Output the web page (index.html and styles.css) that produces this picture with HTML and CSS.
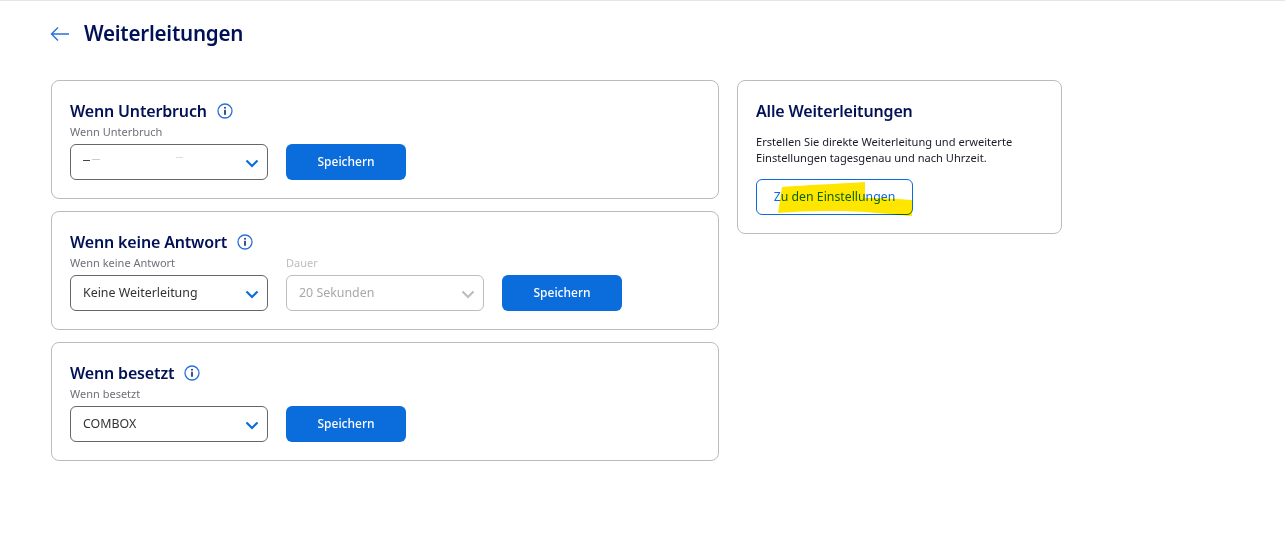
FILE: index.html
```html
<!DOCTYPE html>
<html lang="de">
<head>
    <meta charset="UTF-8">
    <title>Weiterleitungen</title>
    <link rel="stylesheet" href="styles.css">
</head>
<body>
    <header class="page-head">
        <svg class="back-icon" width="20" height="16" viewBox="0 0 20 16" fill="none" stroke="#2a6fdb" stroke-width="1.4">
            <path d="M19 8H1.5M8 1.5L1.5 8L8 14.5"/>
        </svg>
        <h1>Weiterleitungen</h1>
    </header>

    <main class="columns">
        <div class="forward-list">
            <!-- Wenn Unterbruch -->
            <section class="card">
                <h2>Wenn Unterbruch
                    <svg class="info-icon" width="16" height="16" viewBox="0 0 16 16" fill="none">
                        <circle cx="8" cy="8" r="7" stroke="#2a6fdb" stroke-width="1.3"/>
                        <rect x="7.2" y="6.8" width="1.6" height="5" fill="#0a2a6b"/>
                        <rect x="7.2" y="3.9" width="1.6" height="1.7" fill="#0a2a6b"/>
                    </svg>
                </h2>
                <div class="form-row">
                    <div class="field">
                        <span class="field-label">Wenn Unterbruch</span>
                        <div class="select">
                            <!-- number is painted out in the original, only scraps remain -->
                            <span class="scrap-plus"></span>
                            <span class="scrap-specks"></span>
                            <span class="scrap-dash"></span>
                            <svg class="chevron" width="14" height="9" viewBox="0 0 14 9" fill="none" stroke="#0b6cdc" stroke-width="2.2"><path d="M1.5 1.5L7 7L12.5 1.5"/></svg>
                        </div>
                    </div>
                    <button class="btn-primary">Speichern</button>
                </div>
            </section>

            <!-- Wenn keine Antwort -->
            <section class="card">
                <h2>Wenn keine Antwort
                    <svg class="info-icon" width="16" height="16" viewBox="0 0 16 16" fill="none">
                        <circle cx="8" cy="8" r="7" stroke="#2a6fdb" stroke-width="1.3"/>
                        <rect x="7.2" y="6.8" width="1.6" height="5" fill="#0a2a6b"/>
                        <rect x="7.2" y="3.9" width="1.6" height="1.7" fill="#0a2a6b"/>
                    </svg>
                </h2>
                <div class="form-row">
                    <div class="field">
                        <span class="field-label">Wenn keine Antwort</span>
                        <div class="select">
                            <span>Keine Weiterleitung</span>
                            <svg class="chevron" width="14" height="9" viewBox="0 0 14 9" fill="none" stroke="#0b6cdc" stroke-width="2.2"><path d="M1.5 1.5L7 7L12.5 1.5"/></svg>
                        </div>
                    </div>
                    <div class="field disabled">
                        <span class="field-label">Dauer</span>
                        <div class="select">
                            <span>20 Sekunden</span>
                            <svg class="chevron" width="14" height="9" viewBox="0 0 14 9" fill="none" stroke="#bdbdbd" stroke-width="2.2"><path d="M1.5 1.5L7 7L12.5 1.5"/></svg>
                        </div>
                    </div>
                    <button class="btn-primary">Speichern</button>
                </div>
            </section>

            <!-- Wenn besetzt -->
            <section class="card">
                <h2>Wenn besetzt
                    <svg class="info-icon" width="16" height="16" viewBox="0 0 16 16" fill="none">
                        <circle cx="8" cy="8" r="7" stroke="#2a6fdb" stroke-width="1.3"/>
                        <rect x="7.2" y="6.8" width="1.6" height="5" fill="#0a2a6b"/>
                        <rect x="7.2" y="3.9" width="1.6" height="1.7" fill="#0a2a6b"/>
                    </svg>
                </h2>
                <div class="form-row">
                    <div class="field">
                        <span class="field-label">Wenn besetzt</span>
                        <div class="select">
                            <span>COMBOX</span>
                            <svg class="chevron" width="14" height="9" viewBox="0 0 14 9" fill="none" stroke="#0b6cdc" stroke-width="2.2"><path d="M1.5 1.5L7 7L12.5 1.5"/></svg>
                        </div>
                    </div>
                    <button class="btn-primary">Speichern</button>
                </div>
            </section>
        </div>

        <aside class="card side-card">
            <h2>Alle Weiterleitungen</h2>
            <p>Erstellen Sie direkte Weiterleitung und erweiterte Einstellungen tagesgenau und nach Uhrzeit.</p>
            <button class="btn-outline">Zu den Einstellungen
                <!-- yellow marker scribble on top of the button -->
                <svg class="marker" width="140" height="38" viewBox="0 0 140 38">
                    <path d="M2 33L6 7C30 5 60 4 89 2L89 18C105 18 125 19 136 20L136 36C128 36 120 34 100 33C70 30 30 31 2 33Z" fill="#ffe600"/>
                </svg>
            </button>
        </aside>
    </main>
</body>
</html>
```

FILE: styles.css
```css
body {
    margin: 0;
    font-family: "Noto Sans", "Open Sans", sans-serif;
    background-color: #fff;
    color: #001155;
    border-top: 1px solid #e2e6ea;
}

.page-head {
    display: flex;
    align-items: flex-start;
    gap: 14px;
    padding: 16px 0 0 50px;
    height: 63px;
    box-sizing: border-box;
    margin-bottom: 16px;
}

.back-icon {
    margin-top: 9px;
}

h1 {
    margin: 0;
    font-size: 20.6px;
    line-height: 33px;
    font-weight: 600;
    letter-spacing: -0.25px;
}

.columns {
    display: flex;
    align-items: flex-start;
    gap: 18px;
    padding-left: 51px;
}

.forward-list {
    display: flex;
    flex-direction: column;
    gap: 12px;
    width: 668px;
}

.card {
    box-sizing: border-box;
    height: 119px;
    border: 1px solid #bcbcbc;
    border-radius: 8px;
    padding: 18px 18px 0;
}

h2 {
    margin: 0;
    font-size: 16px;
    line-height: 24px;
    font-weight: 600;
    letter-spacing: -0.16px;
    display: flex;
    align-items: center;
    gap: 10px;
}

.form-row {
    display: flex;
    align-items: flex-end;
    gap: 18px;
    padding-top: 1px;
}

.field {
    display: flex;
    flex-direction: column;
    width: 198px;
}

.field-label {
    font-size: 11px;
    line-height: 16px;
    margin-bottom: 4px;
    color: #6f6f78;
}

.select {
    position: relative;
    box-sizing: border-box;
    height: 36px;
    border: 1px solid #666;
    border-radius: 6px;
    padding: 0 0 2px 12px;
    display: flex;
    align-items: center;
    font-size: 12.4px;
    color: #333;
}

.chevron {
    position: absolute;
    right: 8px;
    top: 14px;
}

.disabled .field-label {
    color: #bdbdbd;
}

.disabled .select {
    border-color: #bdbdbd;
    color: #a8a8a8;
}

.scrap-plus {
    position: absolute;
    left: 12px;
    top: 15px;
    width: 7px;
    height: 1px;
    background-color: #444;
}

.scrap-specks {
    position: absolute;
    left: 21px;
    top: 14px;
    width: 8px;
    height: 1px;
    background-color: #ccc;
}

.scrap-dash {
    position: absolute;
    left: 105px;
    top: 12px;
    width: 7px;
    height: 1px;
    background-color: #ddd;
}

.btn-primary {
    width: 120px;
    height: 36px;
    border: none;
    border-radius: 6px;
    padding: 0 0 2px;
    background-color: #0b6cdc;
    color: #fff;
    font-family: inherit;
    font-size: 12px;
    font-weight: 500;
}

.side-card {
    width: 325px;
    height: 154px;
}

.side-card p {
    margin: 11px 0 13px;
    font-size: 11.1px;
    line-height: 16px;
    color: #1a1a2a;
}

.btn-outline {
    position: relative;
    box-sizing: border-box;
    width: 157px;
    height: 36px;
    background-color: #fff;
    border: 1px solid #0b6cdc;
    border-radius: 6px;
    color: #0b6cdc;
    font-family: inherit;
    font-size: 12.3px;
    padding: 0 0 2px;
}

.marker {
    position: absolute;
    left: 19px;
    top: 0;
    mix-blend-mode: multiply;
}
```
